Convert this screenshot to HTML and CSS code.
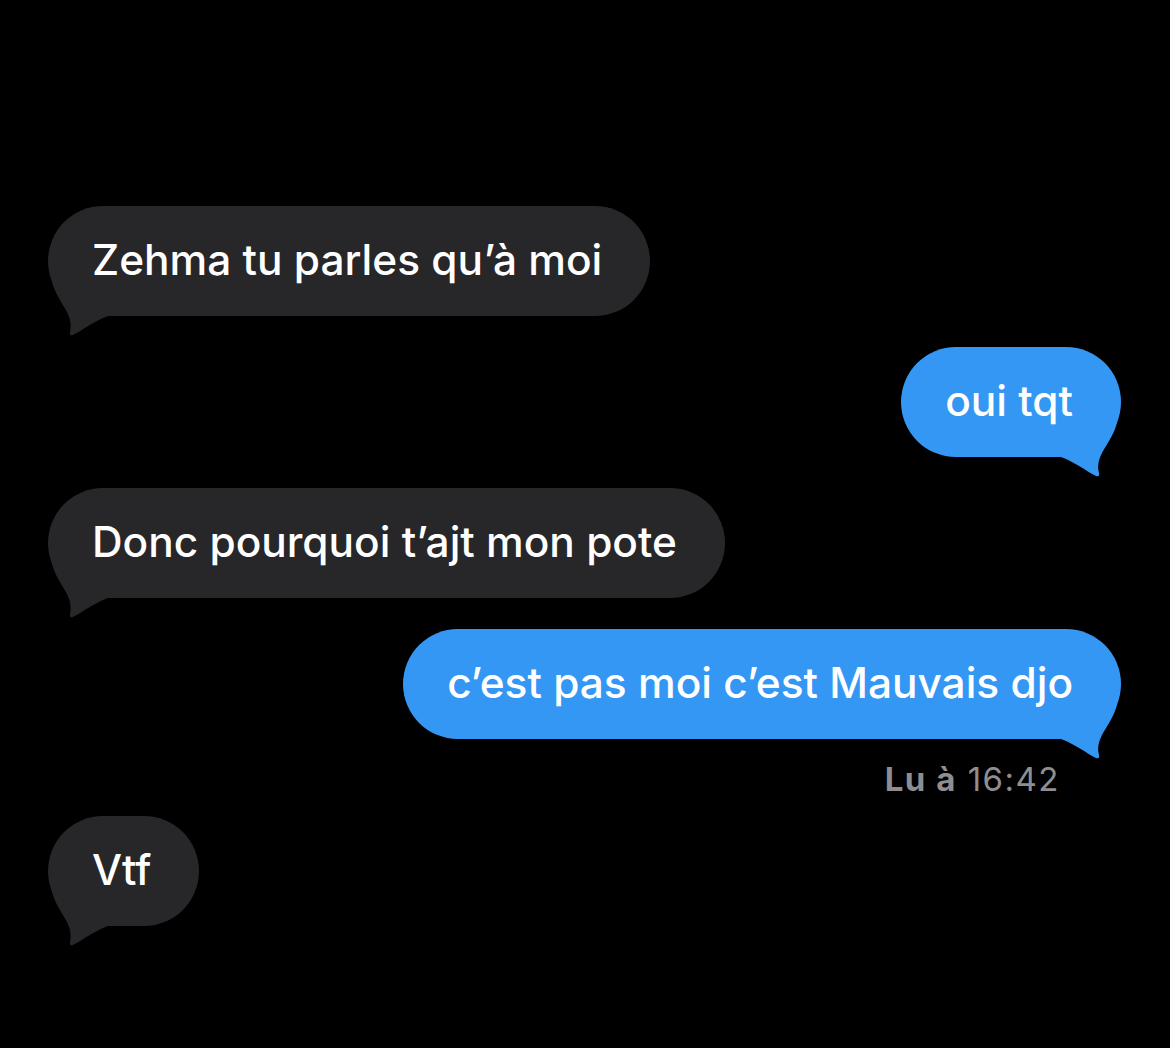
FILE: index.html
```html
<!DOCTYPE html>
<html lang="fr">
<head>
<meta charset="utf-8">
<title>Messages</title>
<link rel="stylesheet" href="styles.css">
</head>
<body>
<main class="thread">
  <div class="row row-in">
    <div class="bubble in"><span class="text">Zehma tu parles qu’à moi</span>
      <svg class="tail tail-in" viewBox="0 0 60 130" width="60" height="130"><path d="M3,60 L3,70 C6,95 27,106 22,126 Q21,130 25,129 C35,124 46,115 60,110 L60,60 Z"/></svg>
    </div>
  </div>
  <div class="row row-out">
    <div class="bubble out"><span class="text">oui tqt</span>
      <svg class="tail tail-out" viewBox="0 0 60 130" width="60" height="130"><path d="M3,60 L3,70 C6,95 27,106 22,126 Q21,130 25,129 C35,124 46,115 60,110 L60,60 Z"/></svg>
    </div>
  </div>
  <div class="row row-in">
    <div class="bubble in"><span class="text">Donc pourquoi t’ajt mon pote</span>
      <svg class="tail tail-in" viewBox="0 0 60 130" width="60" height="130"><path d="M3,60 L3,70 C6,95 27,106 22,126 Q21,130 25,129 C35,124 46,115 60,110 L60,60 Z"/></svg>
    </div>
  </div>
  <div class="row row-out">
    <div class="bubble out"><span class="text">c’est pas moi c’est Mauvais djo</span>
      <svg class="tail tail-out" viewBox="0 0 60 130" width="60" height="130"><path d="M3,60 L3,70 C6,95 27,106 22,126 Q21,130 25,129 C35,124 46,115 60,110 L60,60 Z"/></svg>
    </div>
  </div>
  <div class="receipt"><b>Lu à</b> 16:42</div>
  <div class="row row-in">
    <div class="bubble in"><span class="text">Vtf</span>
      <svg class="tail tail-in" viewBox="0 0 60 130" width="60" height="130"><path d="M3,60 L3,70 C6,95 27,106 22,126 Q21,130 25,129 C35,124 46,115 60,110 L60,60 Z"/></svg>
    </div>
  </div>
</main>
</body>
</html>
```

FILE: styles.css
```css
html, body {
  margin: 0;
  padding: 0;
  background: #000;
}
body {
  width: 1170px;
  height: 1048px;
  overflow: hidden;
  font-family: Inter, "Liberation Sans", sans-serif;
}
.thread {
  display: flex;
  flex-direction: column;
  gap: 31px;
  padding: 206px 49px 0 48px;
}
.row {
  display: flex;
}
.row-in { justify-content: flex-start; }
.row-out { justify-content: flex-end; }
.bubble {
  position: relative;
  height: 110px;
  box-sizing: border-box;
  padding: 0 48px 0 44px;
  border-radius: 55px;
  display: flex;
  align-items: center;
  font-size: 42.4px;
  font-weight: 500;
  color: #fff;
  white-space: nowrap;
}
.text {
  position: relative;
  z-index: 1;
  top: -2px;
}
.bubble.in {
  background: #272629;
}
.bubble.out {
  background: #3597f4;
}
.tail {
  position: absolute;
  top: 0;
  pointer-events: none;
}
.tail-in {
  left: 0;
}
.tail-in path { fill: #272629; }
.tail-out {
  right: 0;
  transform: scaleX(-1);
}
.tail-out path { fill: #3597f4; }
.receipt {
  align-self: flex-end;
  margin: -9px 61px -12px 0;
  font-size: 33px;
  letter-spacing: 1.5px;
  line-height: 36px;
  color: #8e8e90;
}
.receipt b { font-weight: 700; }
```
